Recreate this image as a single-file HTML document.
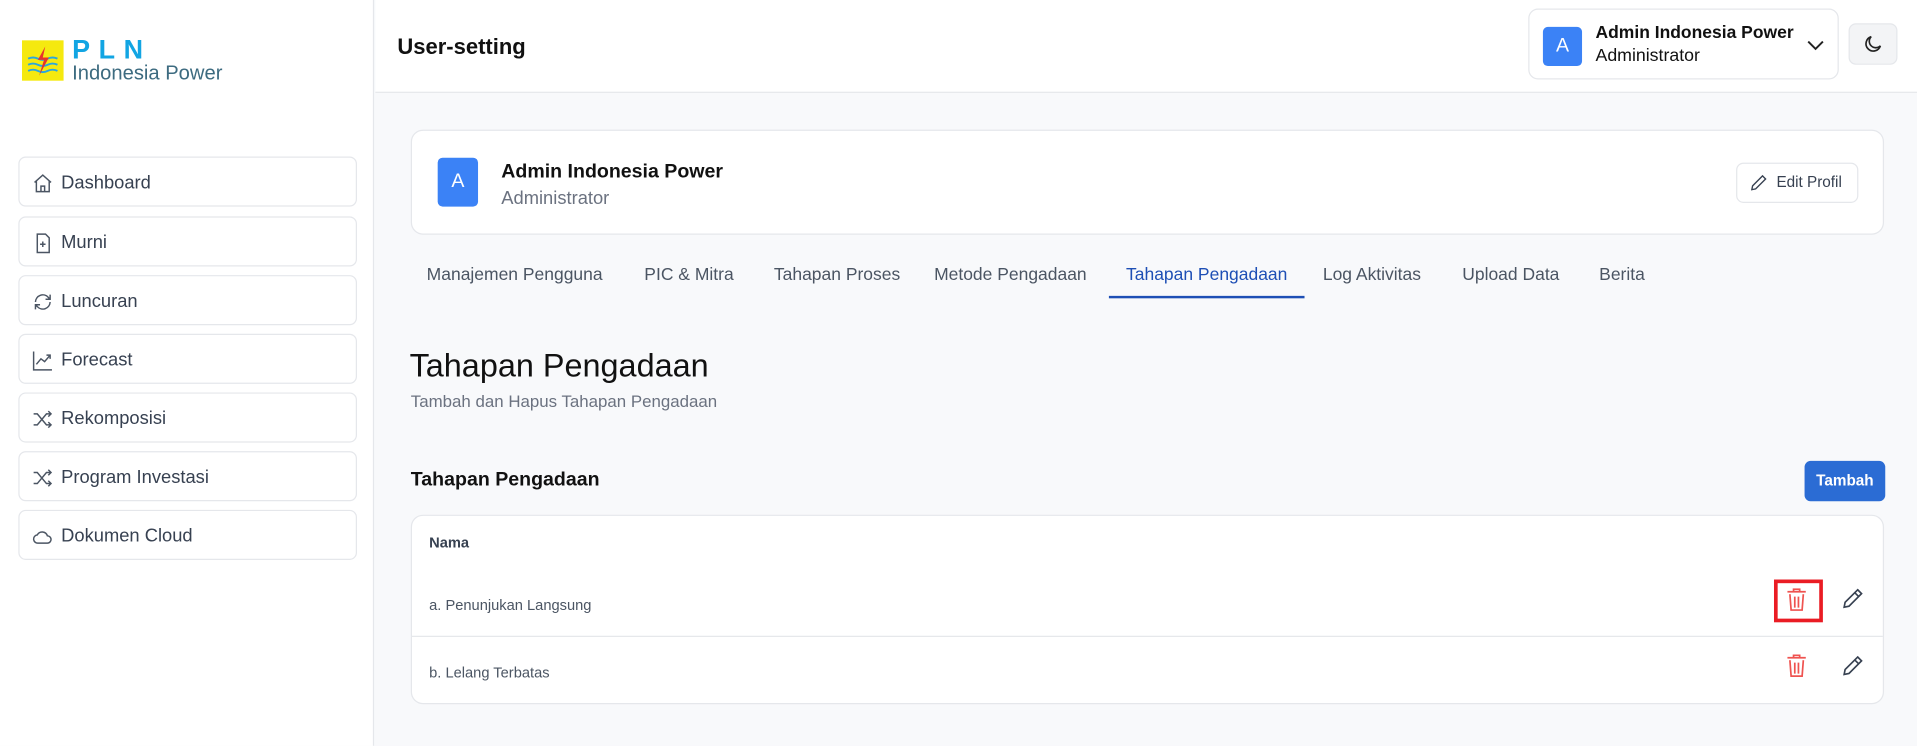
<!DOCTYPE html>
<html><head><meta charset="utf-8"><style>
*{margin:0;padding:0;box-sizing:border-box}
html,body{width:1917px;height:745px;overflow:hidden;background:#f8f9fb;font-family:"Liberation Sans",Arial,sans-serif}
#w{position:absolute;left:0;top:0;width:1568px;height:610px;transform:scale(1.2226);transform-origin:0 0;background:#f8f9fb}
.a{position:absolute;white-space:nowrap}
.side{left:0;top:0;width:306px;height:610px;background:#fff;border-right:1px solid #e5e7eb}
.nav{position:absolute;left:15px;width:277px;height:41px;border:1px solid #e5e7eb;border-radius:6px;background:#fff;font-size:15px;color:#374151;line-height:41px;padding-left:34px}
.nav svg{position:absolute;left:10px;top:12px}
.tab{top:217px;font-size:14.3px;color:#4b5563}
</style></head><body><div id="w">
<div class="a side">
  <div class="a" style="left:18px;top:33px;width:34px;height:33px;background:#f5e90f"></div>
  <svg class="a" style="left:19px;top:35px" width="32" height="30" viewBox="0 0 32 30"><path d="M4 13q4-2 8 0t8 0t8 0M4 18q4-2 8 0t8 0t8 0M4 23q4-2 8 0t8 0t8 0" stroke="#2aa7de" stroke-width="1.6" fill="none"/><path d="M18 3l-6 11h5l-4 13 8-15h-5z" fill="#e6322b"/></svg>
  <div class="a" style="left:59px;top:28px;font-size:22px;font-weight:bold;color:#12a5e3;letter-spacing:7px">PLN</div>
  <div class="a" style="left:59px;top:51px;font-size:16.5px;color:#3d6b80">Indonesia Power</div>
  <div class="nav" style="top:128px"><svg width="18" height="18" viewBox="0 0 24 24" fill="none" stroke="#4b5563" stroke-width="1.6"><path d="M3 11l9-8 9 8M5 9v12h14V9M10 21v-6h4v6"/></svg>Dashboard</div>
  <div class="nav" style="top:177px"><svg width="18" height="18" viewBox="0 0 24 24" fill="none" stroke="#4b5563" stroke-width="1.6"><path d="M6 2h9l4 4v16H6zM12 10v6M9 13h6"/></svg>Murni</div>
  <div class="nav" style="top:225px"><svg width="18" height="18" viewBox="0 0 24 24" fill="none" stroke="#4b5563" stroke-width="1.6"><path d="M4 12a8 8 0 0 1 14-5l2 2M20 12a8 8 0 0 1-14 5l-2-2M20 4v5h-5M4 20v-5h5"/></svg>Luncuran</div>
  <div class="nav" style="top:273px"><svg width="18" height="18" viewBox="0 0 24 24" fill="none" stroke="#4b5563" stroke-width="1.6"><path d="M2 2v20h20M5 16l5-6 4 3 6-7M16 6h4v4"/></svg>Forecast</div>
  <div class="nav" style="top:321px"><svg width="18" height="18" viewBox="0 0 24 24" fill="none" stroke="#4b5563" stroke-width="1.6"><path d="M2 6h4l10 12h5M2 18h4l10-12h5M18 3l3 3-3 3M18 15l3 3-3 3"/></svg>Rekomposisi</div>
  <div class="nav" style="top:369px"><svg width="18" height="18" viewBox="0 0 24 24" fill="none" stroke="#4b5563" stroke-width="1.6"><path d="M2 6h4l10 12h5M2 18h4l10-12h5M18 3l3 3-3 3M18 15l3 3-3 3"/></svg>Program Investasi</div>
  <div class="nav" style="top:417px"><svg width="18" height="18" viewBox="0 0 24 24" fill="none" stroke="#4b5563" stroke-width="1.6"><path d="M7 19h10a4 4 0 0 0 0-8 6 6 0 0 0-11-1 4.5 4.5 0 0 0 1 9z"/></svg>Dokumen Cloud</div>
</div>
<div class="a" style="left:307px;top:0;width:1261px;height:76px;background:#fff;border-bottom:1px solid #e5e7eb"></div>
<div class="a" style="left:325px;top:28px;font-size:18px;font-weight:bold;color:#111">User-setting</div>
<div class="a" style="left:1250px;top:7px;width:254px;height:58px;background:#fff;border:1px solid #e5e7eb;border-radius:8px"></div>
<div class="a" style="left:1262px;top:22px;width:32px;height:32px;background:#3b82f6;border-radius:4px;color:#fff;font-size:16px;text-align:center;line-height:32px">A</div>
<div class="a" style="left:1305px;top:19px;font-size:14.3px;font-weight:bold;color:#111">Admin Indonesia Power</div>
<div class="a" style="left:1305px;top:38px;font-size:14.5px;color:#111">Administrator</div>
<svg class="a" style="left:1477px;top:29px" width="16" height="16" viewBox="0 0 16 16"><path d="M2 5l6 6 6-6" stroke="#222" stroke-width="1.6" fill="none"/></svg>
<div class="a" style="left:1512px;top:19px;width:40px;height:34px;background:#f3f4f6;border:1px solid #e5e7eb;border-radius:6px"></div>
<svg class="a" style="left:1523px;top:27px" width="18" height="18" viewBox="0 0 24 24"><path d="M20 14A8 8 0 1 1 10 4a6.5 6.5 0 0 0 10 10z" stroke="#222" stroke-width="1.8" fill="none"/></svg>

<div class="a" style="left:336px;top:106px;width:1205px;height:86px;background:#fff;border:1px solid #e5e7eb;border-radius:10px"></div>
<div class="a" style="left:358px;top:129px;width:33px;height:40px;background:#3b82f6;border-radius:4px;color:#fff;font-size:16px;text-align:center;line-height:40px">A</div>
<div class="a" style="left:410px;top:132px;font-size:16px;font-weight:bold;color:#111">Admin Indonesia Power</div>
<div class="a" style="left:410px;top:154px;font-size:15px;color:#6b7280">Administrator</div>
<div class="a" style="left:1420px;top:133px;width:100px;height:33px;background:#fff;border:1px solid #e5e7eb;border-radius:6px;font-size:12.5px;color:#374151;line-height:31px;padding-left:32px">Edit Profil</div>
<svg class="a" style="left:1431px;top:142px" width="15" height="15" viewBox="0 0 24 24"><path d="M17 3l4 4L8 20l-5 1 1-5z" stroke="#374151" stroke-width="1.8" fill="none"/></svg>

<div class="a tab" style="left:349px">Manajemen Pengguna</div>
<div class="a tab" style="left:527px">PIC &amp; Mitra</div>
<div class="a tab" style="left:633px">Tahapan Proses</div>
<div class="a tab" style="left:764px">Metode Pengadaan</div>
<div class="a tab" style="left:921px;color:#1e4fb5">Tahapan Pengadaan</div>
<div class="a tab" style="left:1082px">Log Aktivitas</div>
<div class="a tab" style="left:1196px">Upload Data</div>
<div class="a tab" style="left:1308px">Berita</div>
<div class="a" style="left:907px;top:242px;width:160px;height:2px;background:#1e4fb5"></div>

<div class="a" style="left:335px;top:284px;font-size:26.5px;color:#111">Tahapan Pengadaan</div>
<div class="a" style="left:336px;top:321px;font-size:13.8px;color:#6b7280">Tambah dan Hapus Tahapan Pengadaan</div>

<div class="a" style="left:336px;top:384px;font-size:16px;font-weight:bold;color:#111">Tahapan Pengadaan</div>
<div class="a" style="left:1476px;top:377px;width:66px;height:33px;background:#2b6cd4;border-radius:5px;color:#fff;font-size:12.5px;font-weight:bold;text-align:center;line-height:33px">Tambah</div>

<div class="a" style="left:336px;top:421px;width:1205px;height:155px;background:#fff;border:1px solid #e5e7eb;border-radius:10px"></div>
<div class="a" style="left:351px;top:437px;font-size:12px;font-weight:bold;color:#374151">Nama</div>
<div class="a" style="left:351px;top:488px;font-size:12px;color:#4b5563">a. Penunjukan Langsung</div>
<div class="a" style="left:337px;top:520px;width:1203px;height:1px;background:#e5e7eb"></div>
<div class="a" style="left:351px;top:543px;font-size:12px;color:#4b5563">b. Lelang Terbatas</div>
<div class="a" style="left:1451px;top:474px;width:40px;height:35px;border:3px solid #ea1c24"></div>
<svg class="a" style="left:1461px;top:481px" width="17" height="19" viewBox="0 0 17 19"><path d="M1 3h15M6 3V1h5v2M3 5l1 13h9l1-13M7 7v9M10 7v9" stroke="#ef5350" stroke-width="1.4" fill="none"/></svg>
<svg class="a" style="left:1461px;top:535px" width="17" height="19" viewBox="0 0 17 19"><path d="M1 3h15M6 3V1h5v2M3 5l1 13h9l1-13M7 7v9M10 7v9" stroke="#ef5350" stroke-width="1.4" fill="none"/></svg>
<svg class="a" style="left:1506px;top:480px" width="19" height="19" viewBox="0 0 24 24"><path d="M17 3l4 4L8 20l-5 1 1-5zM14 6l4 4" stroke="#374151" stroke-width="1.7" fill="none"/></svg>
<svg class="a" style="left:1506px;top:535px" width="19" height="19" viewBox="0 0 24 24"><path d="M17 3l4 4L8 20l-5 1 1-5zM14 6l4 4" stroke="#374151" stroke-width="1.7" fill="none"/></svg>
</div></body></html>
